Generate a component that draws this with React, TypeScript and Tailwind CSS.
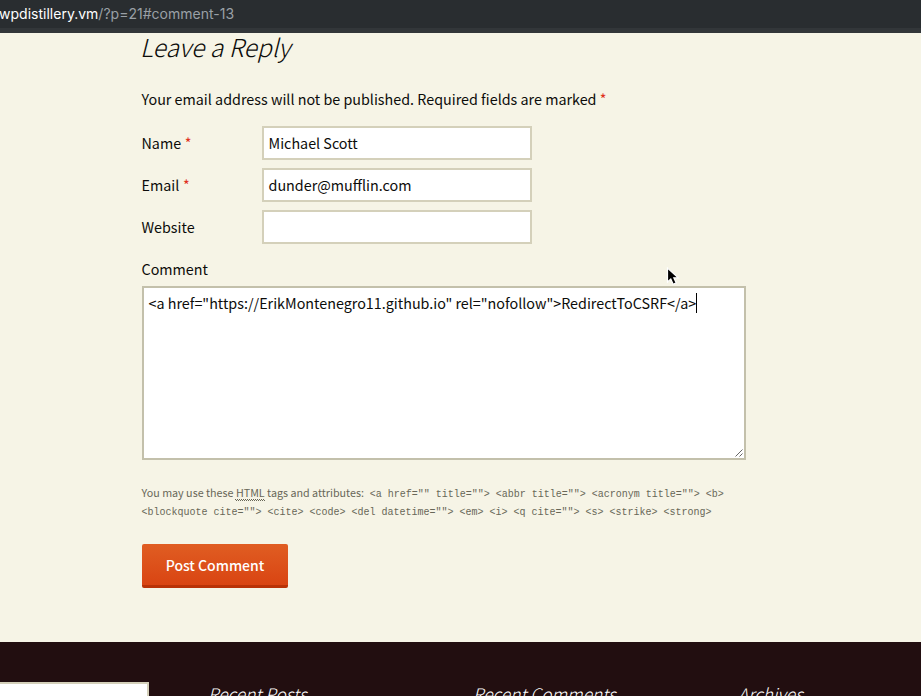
import React from "react";

const sans = "font-['Noto_Sans_CJK_SC','Open_Sans',sans-serif]";
const mono = "font-['Liberation_Mono',monospace]";

function Field({ label, value, required }: { label: string; value: string; required?: boolean }) {
  return (
    <div className="mb-2 flex h-[34px] items-center">
      <label className="w-[121px] shrink-0 pl-[0.5px] whitespace-pre">
        {label}
        {required && <span className="pl-[0.5px] text-[#e0301c]"> *</span>}
      </label>
      <div className="flex h-[34px] w-[270px] items-center border-2 border-[#d4d0ba] bg-white px-[4.5px] whitespace-pre">
        {value}
      </div>
    </div>
  );
}

export default function App() {
  return (
    <div className={`relative flex h-[696px] w-[921px] flex-col overflow-hidden bg-[#f6f4e6] text-[14.33px] leading-6 text-[#0c0c0a] ${sans}`}>
      <header className="h-[33px] shrink-0 border-b-[5px] border-[#323639] bg-[#292d30] font-['Inter',sans-serif] text-[14px] leading-7 tracking-[0.01px] whitespace-pre text-[#9aa0a6]">
        <span className="-ml-px text-white">wpdistillery.vm</span>/?p=21#comment-13
      </header>

      <main className="h-[609px] shrink-0 pl-[141px]">
        <h3 className="-ml-px h-[54px] text-[24.7px] leading-[26px] font-light italic whitespace-pre">Leave a Reply</h3>
        <p className="mb-[15px] pl-[0.5px] whitespace-pre">
          Your email address will not be published. Required fields are marked <span className="text-[#e0301c]">*</span>
        </p>
        <Field label="Name" value="Michael Scott" required />
        <Field label="Email" value="dunder@mufflin.com" required />
        <Field label="Website" value="" />
        <label className="mt-[13px] block pl-[0.5px]">Comment</label>
        <div className="relative mt-[5px] ml-px flex h-[174px] w-[604px] items-start border-2 border-[#c3c0ab] bg-white px-[4.5px] pt-[3px]">
          <span className="whitespace-pre">{'<a href="https://ErikMontenegro11.github.io" rel="nofollow">RedirectToCSRF</a>'}</span>
          <span className="mt-[2px] h-5 w-px bg-black" />
          <svg className="absolute right-0 bottom-0" width="10" height="10" viewBox="0 0 10 10" stroke="#555" strokeWidth="0.9">
            <path d="M1.5 8.5 8.5 1.5M5.5 8.5 8.5 5.5" />
          </svg>
        </div>
        <div className="mt-6 h-[60px] pl-[0.5px] text-[10.74px] leading-[18px] whitespace-pre text-[#686758]">
          <p className="flex h-[18px] items-center">
            <span>You may use these </span>
            <abbr className="mt-px flex h-[14px] items-center border-b border-dotted border-[#686758] pb-px underline decoration-[#686758] decoration-dotted decoration-1 underline-offset-2">HTML</abbr>
            <span> tags and attributes: </span>
            <code className={`ml-[3.5px] pt-1 text-[10px] leading-[14px] ${mono}`}>
              {'<a href="" title=""> <abbr title=""> <acronym title=""> <b>'}
            </code>
          </p>
          <p className="flex h-[18px] items-center">
            <code className={`pt-1 text-[10px] leading-[14px] ${mono}`}>
              {'<blockquote cite=""> <cite> <code> <del datetime=""> <em> <i> <q cite=""> <s> <strike> <strong>'}
            </code>
          </p>
        </div>
        <button className="ml-px flex h-11 w-[146px] items-center justify-center rounded-[2px] border-b-[3px] border-[#b93207] bg-linear-to-b from-[#e05d22] to-[#d94412] text-[14px] font-medium text-white">
          Post Comment
        </button>
      </main>

      <footer className="flex h-[54px] shrink-0 items-start bg-[#220e10] pt-10 text-[17.3px] leading-6 font-light text-white italic">
        <div className="h-10 w-[149px] border-2 border-l-0 border-[#d4d0ba] bg-white" />
        <h3 className="ml-[59px] w-[265px] whitespace-pre">Recent Posts</h3>
        <h3 className="w-[265px] whitespace-pre">Recent Comments</h3>
        <h3 className="whitespace-pre">Archives</h3>
      </footer>

      <svg className="absolute top-[266px] left-[665px]" width="16" height="22" viewBox="0 0 16 22">
        <path d="M2.5 2v14l3.3-3.1 2.4 5.3 3-1.3-2.4-5.1h4.4z" fill="#000" stroke="#fff" strokeWidth="1.2" />
      </svg>
    </div>
  );
}
